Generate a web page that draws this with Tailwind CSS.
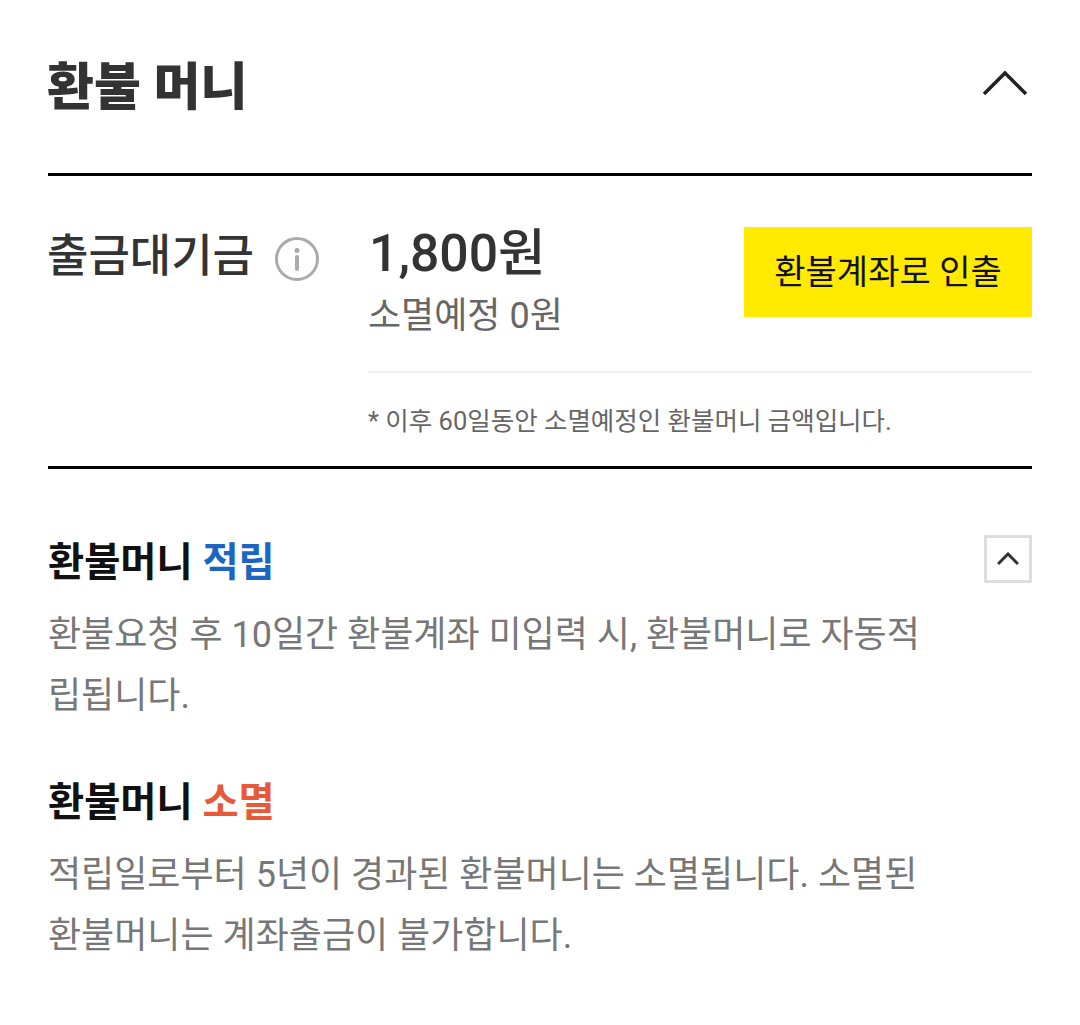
<!DOCTYPE html>
<html lang="ko">
<head>
  <meta charset="UTF-8" />
  <title>환불 머니</title>
  <script src="https://cdn.jsdelivr.net/npm/@tailwindcss/browser@4"></script>
</head>
<body class="bg-white font-['Roboto','Noto_Sans_CJK_KR',sans-serif] w-[1080px] h-[1025px] overflow-hidden px-12">

  <!-- header -->
  <div class="flex items-center justify-between h-[173px] pt-[2px]">
    <h1 class="text-[51px] leading-none font-black text-[#333] -ml-[1px]">환불 머니</h1>
    <svg class="w-[46px] h-[26px] mr-[4px] mb-[9px]" viewBox="0 0 46 26" fill="none" stroke="#222" stroke-width="3.5"><path d="M2 24 L23 3 L44 24" /></svg>
  </div>

  <!-- balance -->
  <div class="border-y-[3px] border-black h-[296px] flex pt-[51px]">
    <div class="w-[320px] flex items-start gap-[20px] pt-[2px]">
      <span class="text-[45px] leading-[56px] font-medium text-[#333] -ml-[1px]">출금대기금</span>
      <svg class="w-[46px] h-[46px] mt-[7px]" viewBox="0 0 46 46" fill="none">
        <circle cx="23" cy="23" r="20.5" stroke="#aaa" stroke-width="3" />
        <circle cx="23" cy="14.5" r="2.5" fill="#aaa" />
        <path d="M23 21 V33" stroke="#aaa" stroke-width="4" stroke-linecap="round" />
      </svg>
    </div>
    <div class="flex-1">
      <div class="flex justify-between items-start">
        <div>
          <div class="text-[51.7px] leading-[54px] font-medium text-[#333] pl-[1px]">1,800원</div>
          <div class="text-[36px] leading-[44px] text-[#666] mt-[13px]">소멸예정 0원</div>
        </div>
        <button class="w-[288px] h-[90px] bg-[#ffea00] text-[34px] text-[#111]">환불계좌로 인출</button>
      </div>
      <div class="h-[2px] bg-[#eee] mt-[33px]"></div>
      <p class="text-[25.5px] leading-[36px] text-[#666] mt-[30px]">* 이후 60일동안 소멸예정인 환불머니 금액입니다.</p>
    </div>
  </div>

  <!-- notes -->
  <div class="pt-[66px]">
    <div class="flex justify-between items-start">
      <h2 class="text-[39.3px] leading-[50px] font-bold text-[#111] mt-[3px]">환불머니 <span class="text-[#1a66c2]">적립</span></h2>
      <div class="w-[48px] h-[48px] border-[3px] border-[#ddd] flex items-center justify-center">
        <svg class="w-[22px] h-[14px]" viewBox="0 0 22 14" fill="none" stroke="#333" stroke-width="3"><path d="M1 12 L11 2 L21 12" /></svg>
      </div>
    </div>
    <p class="text-[36px] leading-[61px] text-[#777] mt-[17px] w-[880px]">환불요청 후 10일간 환불계좌 미입력 시, 환불머니로 자동적립됩니다.</p>
    <h2 class="text-[39.3px] leading-[50px] font-bold text-[#111] mt-[51px]">환불머니 <span class="text-[#e8593a]">소멸</span></h2>
    <p class="text-[36px] leading-[61px] text-[#777] mt-[17px] w-[880px]">적립일로부터 5년이 경과된 환불머니는 소멸됩니다. 소멸된 환불머니는 계좌출금이 불가합니다.</p>
  </div>

</body>
</html>
